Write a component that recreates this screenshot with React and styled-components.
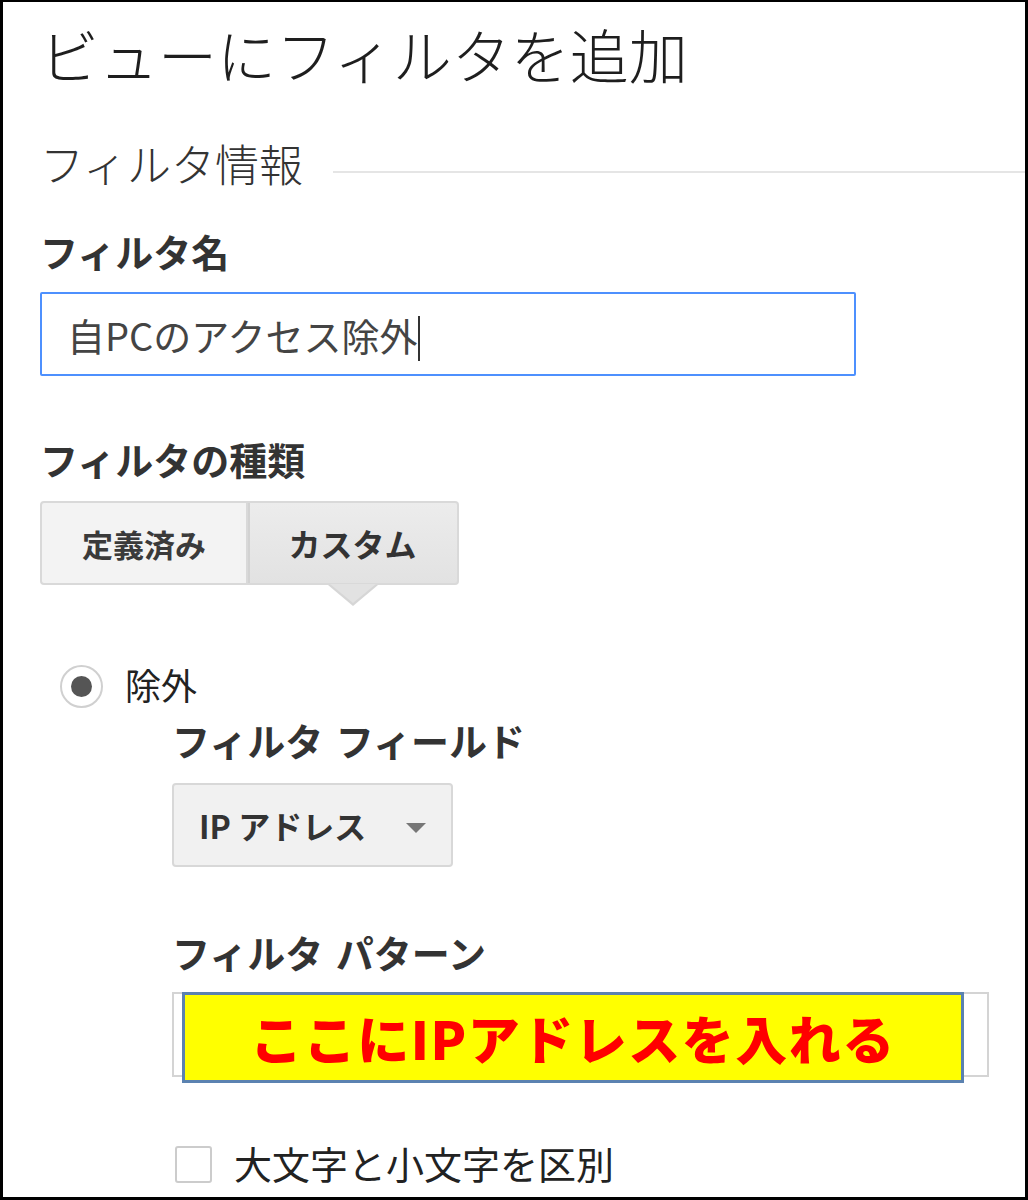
import React from 'react';
import styled, { createGlobalStyle } from 'styled-components';

const GlobalStyle = createGlobalStyle`
	html, body {
		margin: 0;
		padding: 0;
		background: #fff;
	}
	body {
		font-family: "Noto Sans CJK JP", "Noto Sans", sans-serif;
		color: #222;
	}
`;

const Frame = styled.div`
	box-sizing: border-box;
	width: 1028px;
	height: 1200px;
	border: 3px solid #000;
	border-top-width: 2px;
	padding: 22px 0 0 37px;
	overflow: hidden;
	background: #fff;
`;

const Title = styled.h1`
	margin: 0;
	font-size: 59px;
	line-height: 59px;
	font-weight: 300;
	color: #1e1e1e;
	white-space: nowrap;
`;

const SectionHeader = styled.div`
	display: flex;
	align-items: flex-start;
	margin-top: 58px;
`;

const SectionTitle = styled.h2`
	margin: 0;
	font-size: 44px;
	line-height: 44px;
	font-weight: 300;
	color: #333;
	white-space: nowrap;
`;

const Rule = styled.div`
	flex: 1;
	height: 2px;
	margin: 30px 0 0 30px;
	background: #e5e5e5;
`;

const Label = styled.div`
	margin-top: ${p => p.$gap}px;
	font-size: 38px;
	line-height: 38px;
	font-weight: 700;
	color: #333;
	white-space: pre;
	word-spacing: 4px;
`;

const TextField = styled.div`
	box-sizing: border-box;
	display: flex;
	align-items: center;
	width: ${p => p.$width}px;
	height: ${p => p.$height}px;
	margin-top: ${p => p.$gap}px;
	padding-left: 25px;
	border: 2px solid ${p => (p.$focused ? '#4d90fe' : '#d4d4d4')};
	border-radius: ${p => (p.$focused ? 2 : 0)}px;
	font-size: 38px;
	color: #444;
	background: #fff;
	position: relative;
`;

const Caret = styled.span`
	display: inline-block;
	width: 2px;
	height: 45px;
	margin-left: 1px;
	margin-top: 8px;
	background: #333;
`;

const Segmented = styled.div`
	display: flex;
	width: 419px;
	height: 84px;
	margin-top: 23px;
`;

const Segment = styled.div`
	box-sizing: border-box;
	position: relative;
	display: flex;
	align-items: center;
	justify-content: center;
	width: ${p => p.$width}px;
	height: 84px;
	border: 2px solid #d9d9d9;
	border-left-width: ${p => (p.$first ? 2 : 0)}px;
	border-radius: ${p => (p.$first ? '4px 0 0 4px' : '0 4px 4px 0')};
	background: ${p => (p.$active ? 'linear-gradient(#ececec, #e2e2e2)' : '#f3f3f3')};
	box-shadow: ${p => (p.$active ? 'inset 2px 0 0 #d2d2d2' : 'none')};
	font-size: ${p => p.$size}px;
	font-weight: 700;
	color: ${p => (p.$active ? '#333' : '#3a3a3a')};

	${p =>
		p.$active &&
		`
		&::before {
			content: '';
			position: absolute;
			left: 50%;
			bottom: -23px;
			margin-left: -25px;
			border-left: 25px solid transparent;
			border-right: 25px solid transparent;
			border-top: 21px solid #d6d6d6;
		}
		&::after {
			content: '';
			position: absolute;
			left: 50%;
			bottom: -20px;
			margin-left: -23px;
			border-left: 23px solid transparent;
			border-right: 23px solid transparent;
			border-top: 19px solid #e2e2e2;
		}
	`}
`;

const RadioRow = styled.div`
	display: flex;
	align-items: center;
	height: 43px;
	margin: 80px 0 0 20px;
	font-size: 36px;
	color: #222;
`;

const Radio = styled.span`
	box-sizing: border-box;
	display: flex;
	align-items: center;
	justify-content: center;
	width: 43px;
	height: 43px;
	margin-right: 22px;
	border: 2px solid #d0d0d0;
	border-radius: 50%;
	background: #fff;

	&::after {
		content: '';
		width: 21px;
		height: 21px;
		border-radius: 50%;
		background: #555;
	}
`;

const RadioText = styled.span`
	line-height: 43px;
	margin-top: -4px;
`;

const Nested = styled.div`
	padding-left: 132px;
`;

const Select = styled.div`
	box-sizing: border-box;
	display: flex;
	align-items: center;
	width: 281px;
	height: 84px;
	margin-top: 24px;
	padding: 0 25px 0 25px;
	border: 2px solid #d8d8d8;
	border-radius: 4px;
	background: #f1f1f1;
	font-size: 32px;
	font-weight: 700;
	color: #333;
`;

const SelectText = styled.span`
	flex: 1;
	white-space: pre;
`;

const Caret2 = styled.span`
	width: 0;
	height: 0;
	margin-top: 6px;
	border-left: 10px solid transparent;
	border-right: 10px solid transparent;
	border-top: 10px solid #777;
`;

const PatternWrap = styled.div`
	position: relative;
	margin-top: 21px;
	width: 817px;
`;

const Callout = styled.div`
	box-sizing: border-box;
	position: absolute;
	left: 10px;
	top: 0;
	width: 782px;
	height: 91px;
	display: flex;
	align-items: center;
	justify-content: center;
	border: 3px solid #5b82b0;
	background: #ffff00;
	color: #ff0000;
	font-size: 52px;
	font-weight: 900;
	letter-spacing: 1.5px;
	white-space: nowrap;
`;

const CheckRow = styled.div`
	display: flex;
	align-items: center;
	height: 38px;
	margin: 68px 0 0 3px;
	font-size: 38px;
	color: #222;
`;

const Checkbox = styled.span`
	box-sizing: border-box;
	width: 37px;
	height: 37px;
	margin-right: 22px;
	border: 2px solid #cccccc;
	border-radius: 3px;
	background: #fff;
`;

const CheckText = styled.span`
	line-height: 38px;
	margin-top: -2px;
`;

export default function App() {
	return (
		<>
			<GlobalStyle />
			<Frame>
				<Title>ビューにフィルタを追加</Title>
				<SectionHeader>
					<SectionTitle>フィルタ情報</SectionTitle>
					<Rule />
				</SectionHeader>

				<Label $gap={47}>フィルタ名</Label>
				<TextField $focused $width={816} $height={84} $gap={22}>
					自PCのアクセス除外
					<Caret />
				</TextField>

				<Label $gap={64}>フィルタの種類</Label>
				<Segmented>
					<Segment $first $width={208} $size={31}>
						定義済み
					</Segment>
					<Segment $active $width={211} $size={32}>
						カスタム
					</Segment>
				</Segmented>

				<RadioRow>
					<Radio />
					<RadioText>除外</RadioText>
				</RadioRow>

				<Nested>
					<Label $gap={13}>フィルタ フィールド</Label>
					<Select>
						<SelectText>IP アドレス</SelectText>
						<Caret2 />
					</Select>

					<Label $gap={66}>フィルタ パターン</Label>
					<PatternWrap>
						<TextField $width={817} $height={85} $gap={0} />
						<Callout>ここにIPアドレスを入れる</Callout>
					</PatternWrap>

					<CheckRow>
						<Checkbox />
						<CheckText>大文字と小文字を区別</CheckText>
					</CheckRow>
				</Nested>
			</Frame>
		</>
	);
}
